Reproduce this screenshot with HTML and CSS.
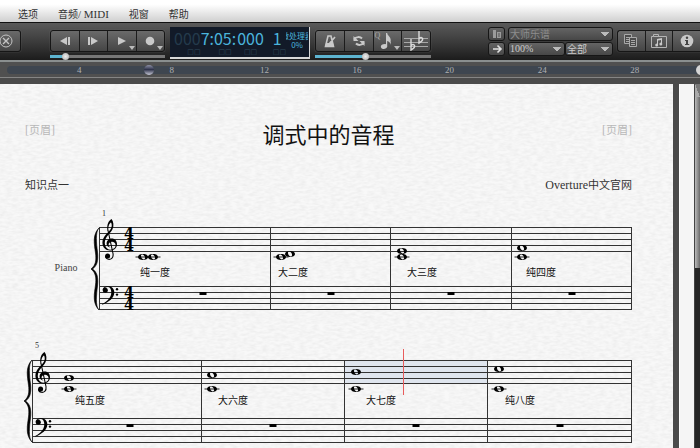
FILE: index.html
```html
<!DOCTYPE html>
<html lang="zh-CN">
<head>
<meta charset="utf-8">
<title>Overture</title>
<link rel="stylesheet" href="styles.css">
</head>
<body>
<nav class="menubar">
  <button>选项</button>
  <button>音频<span class="latin">/ MIDI</span></button>
  <button>视窗</button>
  <button>帮助</button>
</nav>

<header class="toolbar">
  <div class="stack">
    <div class="group group-left">
      <button class="tool tool-close" aria-label="关闭"><svg width="14" height="14" viewBox="0 0 14 14"><g fill="none" stroke="#c4c4c4"><circle cx="6" cy="7" r="6"/><path d="M3 4l6 6M9 4l-6 6" stroke-width="1.4"/></g></svg></button>
    </div>
  </div>

  <div class="stack transport">
    <div class="group">
      <button class="tool" aria-label="后退"><svg width="12" height="10" viewBox="0 0 12 10"><path d="M8 1v8L1 5zM9 1h2v8H9z"/></svg></button>
      <button class="tool" aria-label="前进"><svg width="12" height="10" viewBox="0 0 12 10"><path d="M1 1h2v8H1zM4 1l7 4-7 4z"/></svg></button>
      <button class="tool has-menu" aria-label="播放"><svg width="12" height="10" viewBox="0 0 12 10"><path d="M2 1l8 4-8 4z"/></svg></button>
      <button class="tool has-menu" aria-label="录音"><svg width="12" height="10" viewBox="0 0 12 10"><circle cx="6" cy="5" r="4.3"/></svg></button>
    </div>
    <input class="slider" type="range" min="0" max="100" value="11" style="--fill:13%" aria-label="位置">
  </div>

  <div class="lcd">
    <div class="unit"><div class="digits"><span class="dim">000</span>7:</div><div class="boxes">□□</div></div>
    <div class="unit"><div class="digits">05:</div><div class="boxes">□□</div></div>
    <div class="unit"><div class="digits">000</div><div class="boxes">□□</div></div>
    <div class="unit"><div class="digits">1</div><div class="boxes">□□</div></div>
    <div class="cpu"><span>微处理器</span><span>0%</span></div>
  </div>

  <div class="stack tools">
    <div class="group">
      <button class="tool" aria-label="节拍器"><svg width="14" height="16" viewBox="0 0 14 16"><path fill="none" stroke="#c9c9c9" stroke-width="1.6" d="M5 3h3l2.500 10.500H2.500zM3 11h7M6 11L12 4"/><path d="M3 10h7l1 4H2z"/></svg></button>
      <button class="tool" aria-label="循环"><svg width="14" height="14" viewBox="0 0 14 14"><path fill="none" stroke="#c9c9c9" stroke-width="2" d="M2 5.500C4 2.500 8 2.500 10 4.500M12 8.500C10 11.500 6 11.500 4 9.500"/><path d="M1.500 2v5h5zM12.500 12V7h-5z"/></svg></button>
      <button class="tool has-menu quant" aria-label="量化"><span class="q">Q</span><svg width="14" height="18" viewBox="0 0 14 18"><ellipse cx="4" cy="14.500" rx="3.200" ry="2.300" transform="rotate(-20 4 14.500)"/><path d="M6 1h1.200c0 3 4.800 4 3.300 9.500C10.500 8 8.500 7 7.200 6.500V14.500H6zM7.200 5c1 2 4.500 3 3.600 8C10.800 11 9 9.500 7.200 9z"/></svg></button>
      <button class="tool" aria-label="降号"><svg width="26" height="20" viewBox="0 0 26 20"><path d="M1 7.500h24M1 11.500h24M1 15.500h24" stroke="#a8a8a8"/><path fill="none" stroke="#dadada" stroke-width="1.400" d="M8 8v11c2-1 4-3 3.500-4.500S9 13 8 15M16 0v12c2-1 4-3 3.500-4.500S17 6 16 8"/></svg></button>
    </div>
    <input class="slider" type="range" min="0" max="100" value="43" style="--fill:43%" aria-label="速度">
  </div>

  <div class="view">
    <button class="mini" aria-label="轨道"><svg width="12" height="10" viewBox="0 0 12 10"><path d="M2 1h3v8H2zM6 3h4v6H6z" fill="#9b9b9b"/><path d="M7 5h2M7 7h2" stroke="#555"/></svg></button>
    <select class="wide dimmed" aria-label="视图"><option>大师乐谱</option></select>
    <button class="mini" aria-label="转到"><svg width="12" height="10" viewBox="0 0 12 10"><path fill="none" stroke="#e2e2e2" stroke-width="1.600" d="M2 5h8M6.500 1.500L10 5 6.500 8.500"/></svg></button>
    <select class="zoom" aria-label="缩放"><option>100%</option></select>
    <select aria-label="范围"><option>全部</option></select>
  </div>

  <div class="group group-right">
    <button class="tool" aria-label="复制"><svg width="16" height="16" viewBox="0 0 16 16"><g fill="#4c4c4c" stroke="#a9a9a9"><path d="M1.500 1.500h7v9h-7z"/><path d="M3 4.500h4M3 6.500h4M3 8.500h4"/><path d="M6.500 4.500h7v9h-7z"/><path d="M8 7.500h4M8 9.500h4M8 11.500h4"/></g></svg></button>
    <button class="tool" aria-label="曲库"><svg width="18" height="16" viewBox="0 0 18 16"><path fill="none" stroke="#b5b5b5" d="M1.500 3.500h2v-2h5v2h8v11h-15zM3.500 3.500h6"/><path d="M7 6l5-1v6H11V7L8 7.600V12H7z"/><circle cx="6.700" cy="12" r="1.500"/><circle cx="10.800" cy="11" r="1.500"/></svg></button>
    <button class="tool" aria-label="信息"><svg width="14" height="14" viewBox="0 0 14 14"><circle cx="7" cy="7" r="6.300"/><path d="M5 6h3v4h1.200v1H5v-1h1V7H5z" fill="#444"/><circle cx="7" cy="3.800" r="1.200" fill="#444"/></svg></button>
  </div>
</header>

<div class="ruler">
  <div class="groove">
    <span>4</span><span>8</span><span>12</span><span>16</span><span>20</span><span>24</span><span>28</span>
  </div>
  <input class="playhead" type="range" min="0" max="1000" value="203" aria-label="播放位置">
  <i class="endcap"></i>
</div>

<div class="workspace">
  <main class="page">
    <svg class="grain" aria-hidden="true">
      <filter id="grain" x="0" y="0" width="100%" height="100%">
        <feTurbulence type="fractalNoise" baseFrequency="0.16 0.4" numOctaves="2" seed="4"/>
        <feColorMatrix values="0 0 0 0 0  0 0 0 0 0  0 0 0 0 0  0.08 0 0 0 -0.025"/>
      </filter>
      <rect width="100%" height="100%" filter="url(#grain)"/>
    </svg>

    <div class="heading">
      <span class="slot"><span class="latin">[</span>页眉<span class="latin">]</span></span>
      <h1>调式中的音程</h1>
      <span class="slot end"><span class="latin">[</span>页眉<span class="latin">]</span></span>
    </div>
    <div class="credits">
      <span>知识点一</span>
      <span><span class="latin">Overture</span>中文官网</span>
    </div>

    <svg class="system" viewBox="0 0 673 120">
      <defs>
        <g id="treble">
          <path d="M9.600 0C11.600 2.500 12 7 10.600 10C8.500 14.500 3 17.500 2.800 23.500C2.700 28 5.500 30.700 8.300 30.700C11.500 30.700 13.600 28.600 13.600 26.300C13.600 24 12 22.800 10 22.800C7.800 22.800 6.600 24.200 6.600 25.600C6.600 27 7.300 28 8.600 28.700C6 28.200 4.600 26.500 4.600 24.500C4.600 21.800 6.800 19.600 9.800 19.600C13 19.600 15 22 15 25.300C15 29 12.300 31.600 8 31.600C3.500 31.600 .4 28.500 .4 23.600C.4 17 7 13.500 9 9.500C10 7.500 10 4.500 9 3.400C7.600 4 6 7 6.400 11L5.400 11.500C4.600 6 6.500 1.500 9.600 0Z"/>
          <path d="M5.900 11L11 34.500C11.800 39.500 8.500 40.500 6.500 40.300C4.500 40 3.500 38.500 3.600 37" fill="none" stroke="#000" stroke-width="1.100"/>
          <circle cx="5.600" cy="37" r="2.500"/>
        </g>
        <g id="bass">
          <path d="M.6 4C.6 1.500 3.300 .2 6 .2C10 .2 12.300 2.800 12.300 6.500C12.300 12 7 16 .2 18.700V18C5.500 15.300 9.300 11.500 9.300 6.500C9.300 3 8 1 5.700 1C3.800 1 2 2 1.700 3Z"/>
          <circle cx="3.300" cy="4.200" r="2.500"/>
          <circle cx="15" cy="3.200" r="1.200"/><circle cx="15" cy="8.600" r="1.200"/>
        </g>
        <path id="brace" d="M8 0C1 7 3.500 17 4.500 25C5.300 32 5 37 0 41C5 45 5.300 50 4.500 57C3.500 65 1 75 8 82C4 78 5.500 66 6.500 58C7.500 49 6 44 1.500 41C6 38 7.500 33 6.500 24C5.500 16 4 4 8 0Z" stroke="#000" stroke-width=".6"/>
        <path id="whole" fill-rule="evenodd" d="M-5 0C-5-2-2.800-3 0-3S5-2 5 0 2.800 3 0 3-5 2-5 0ZM-2-1.200C-2.200 .5-.5 2.400 .8 2.400S2.200 1.200 2 .6C1.700-1 .6-2.400-.7-2.400-1.500-2.400-2-2-2-1.200Z"/>
        <path id="low" d="M-7.500 0h15" stroke="#222"/>
        <path id="rest" d="M-3.500 0h7v3h-7z"/>
      </defs>
      <g class="lines">
        <path d="M99 27.500H632M99 33.500H632M99 39.500H632M99 45.500H632M99 51.500H632M99 86.500H632M99 92.500H632M99 98.500H632M99 103.500H632M99 109.500H632"/>
        <path d="M99.500 27V110M270.500 27V110M390.500 27V110M511.500 27V110M631.500 27V110"/>
      </g>
      <use href="#brace" x="91" y="28"/>
      <use href="#treble" x="102" y="19"/>
      <use href="#bass" x="102" y="86"/>
      <g class="meter"><text x="129" y="39">4</text><text x="129" y="51">4</text><text x="129" y="98">4</text><text x="129" y="110">4</text></g>
      <use href="#low" x="143" y="57"/><use href="#low" x="153" y="57"/><use href="#low" x="281" y="57"/><use href="#low" x="402" y="57"/><use href="#low" x="522" y="57"/>
      <use href="#whole" x="143" y="57"/><use href="#whole" x="153" y="57"/>
      <use href="#whole" x="281" y="57"/><use href="#whole" x="290" y="54"/>
      <use href="#whole" x="402" y="51"/><use href="#whole" x="402" y="57"/>
      <use href="#whole" x="522" y="48"/><use href="#whole" x="522" y="57"/>
      <use href="#rest" x="203" y="92"/><use href="#rest" x="331" y="92"/><use href="#rest" x="451" y="92"/><use href="#rest" x="572" y="92"/>
      <text class="number" x="104" y="16">1</text>
      <text class="part" x="66" y="71">Piano</text>
      <g class="lyric"><text x="155" y="76">纯一度</text><text x="293" y="76">大二度</text><text x="422" y="76">大三度</text><text x="541" y="76">纯四度</text></g>
    </svg>

    <svg class="system" viewBox="0 0 673 120">
      <path class="selection" d="M345 25h143v24H345z"/>
      <g class="lines">
        <path d="M32 25.500H632M32 31.500H632M32 37.500H632M32 43.500H632M32 48.500H632M32 83.500H632M32 89.500H632M32 95.500H632M32 101.500H632M32 107.500H632"/>
        <path d="M32.500 25V108M201.500 25V108M344.500 25V108M487.500 25V108M631.500 25V108"/>
      </g>
      <use href="#brace" x="24" y="25"/>
      <use href="#treble" x="35" y="17"/>
      <use href="#bass" x="35" y="83"/>
      <use href="#low" x="69" y="54"/><use href="#low" x="212" y="54"/><use href="#low" x="356" y="54"/><use href="#low" x="499" y="54"/>
      <use href="#whole" x="69" y="43"/><use href="#whole" x="69" y="54"/>
      <use href="#whole" x="212" y="40"/><use href="#whole" x="212" y="54"/>
      <use href="#whole" x="356" y="37"/><use href="#whole" x="356" y="54"/>
      <use href="#whole" x="499" y="34"/><use href="#whole" x="499" y="54"/>
      <use href="#rest" x="130" y="89"/><use href="#rest" x="273" y="89"/><use href="#rest" x="416" y="89"/><use href="#rest" x="560" y="89"/>
      <text class="number" x="37" y="13">5</text>
      <g class="lyric"><text x="90" y="69">纯五度</text><text x="233" y="69">大六度</text><text x="381" y="69">大七度</text><text x="520" y="69">纯八度</text></g>
      <path class="cursor" d="M403 14h1v46h-1z"/>
    </svg>
  </main>
  <div class="next-page"></div>
  <div class="scrollbar"><div class="arrow"></div><div class="thumb"></div></div>
</div>
</body>
</html>
```
FILE: styles.css
```css
* { box-sizing: border-box; }

body {
  margin: 0;
  height: 100vh;
  display: flex;
  flex-direction: column;
  overflow: hidden;
  background: #4b4b4b;
  font-family: "Noto Sans CJK SC", sans-serif;
}

button, select {
  margin: 0;
  padding: 0;
  border: 0;
  background: none;
  color: inherit;
  font: inherit;
}

.latin { font: 12px/12px "Liberation Serif", serif; }

/* Menu bar */
.menubar {
  flex: none;
  display: flex;
  gap: 20px;
  height: 22px;
  padding: 6px 18px 0;
  background: linear-gradient(#fff 20%, #cfcfcf);
  color: #333;
  font-size: 10px;
  line-height: 16px;
}
.menubar button { white-space: pre; }
.menubar .latin { font-size: 11px; }

/* Toolbar */
.toolbar {
  flex: none;
  display: flex;
  height: 38px;
  padding-top: 4px;
  border-top: 1px solid #111;
  background: linear-gradient(#5a5a5a, #3c3c3c 50%, #1c1c1c);
  overflow: hidden;
}
.stack { padding-top: 3px; flex: none; }
.transport { width: 115px; margin-left: 29px; }
.tools { width: 116px; margin-left: 5px; }

.group {
  display: flex;
  height: 22px;
  border: 1px solid #161616;
  border-radius: 3px;
  background: linear-gradient(#6a6a6a, #454545);
  box-shadow: 0 0 1px #888;
}
.tool {
  position: relative;
  flex: 1;
  display: flex;
  align-items: center;
  justify-content: center;
  border-left: 1px solid #1c1c1c;
  fill: #c9c9c9;
}
.tool:first-child { border-left: 0; }
.group-left { width: 21px; border-left: 0; border-radius: 0 3px 3px 0; }
.tool-close { justify-content: flex-start; }
.has-menu::after {
  content: "";
  position: absolute;
  right: 1px;
  bottom: 1px;
  border: 3px solid transparent;
  border-top: 4px solid #bbb;
  border-bottom: 0;
}
.q {
  position: absolute;
  left: 1px;
  top: 0;
  color: #aaa;
  font: 8px/10px "Liberation Serif", serif;
}

.slider {
  display: block;
  width: 100%;
  height: 8px;
  margin: 0;
  appearance: none;
  background: linear-gradient(90deg, #5db4d0 var(--fill), #777 var(--fill)) center / 100% 3px no-repeat;
}
.slider::-webkit-slider-thumb {
  appearance: none;
  width: 7px;
  height: 7px;
  border-radius: 50%;
  background: radial-gradient(#eee, #aaa);
}

/* Time display */
.lcd {
  flex: none;
  display: flex;
  width: 140px;
  height: 32px;
  margin-left: 5px;
  padding: 0 1px 0 4px;
  border: solid #d8d8d8;
  border-width: 0 1px 2px 0;
  background: #121a28;
  color: #4bb4dc;
  overflow: hidden;
}
.digits {
  height: 22px;
  font: 16px/22px "Noto Sans CJK SC", sans-serif;
  white-space: nowrap;
}
.dim { color: #243a4c; }
.boxes { color: #2f4a5c; font: 7px/7px "DejaVu Sans", sans-serif; text-align: center; }
.unit:nth-child(2) { margin-right: 1px; }
.unit:nth-child(3) { margin-right: 9px; }
.cpu {
  flex: 1;
  min-width: 0;
  display: flex;
  flex-direction: column;
  align-items: center;
  padding-top: 4px;
  overflow: hidden;
  font-size: 8px;
  line-height: 9px;
  white-space: nowrap;
}

/* View selectors */
.view {
  flex: none;
  display: grid;
  grid-template-columns: 20px 57px 48px;
  grid-auto-rows: 14px;
  gap: 1px 0;
  margin-left: auto;
  margin-right: 4px;
}
.mini, .view select {
  border: 1px solid #161616;
  border-radius: 3px;
  background: linear-gradient(#646464, #474747);
}
.mini { display: flex; align-items: center; justify-content: center; width: 17px; }
.view select {
  appearance: none;
  padding-left: 1px;
  color: #ccc;
  font-size: 10px;
  line-height: 12px;
  background:
    linear-gradient(to bottom right, #bbb 50%, transparent 50%) right 3px center / 4px 5px no-repeat,
    linear-gradient(to bottom left, #bbb 50%, transparent 50%) right 7px center / 4px 5px no-repeat,
    linear-gradient(#646464, #474747);
}
.view .wide { grid-column: 2 / span 2; }
.view .dimmed { color: #8d8d8d; }
.view .zoom { font: 10px/12px "Liberation Serif", serif; }
.group-right {
  flex: none;
  width: 83px;
  height: 22px;
  margin-top: 3px;
  border-right: 0;
  border-radius: 3px 0 0 3px;
}

/* Measure ruler */
.ruler {
  position: relative;
  flex: none;
  height: 24px;
  padding: 4px 0 0 7px;
  border-top: 2px solid #8a8f8f;
  background: linear-gradient(#505050 15px, #858585 15px, #858585 16px, #4b4b4b 16px);
  overflow: hidden;
}
.groove {
  display: grid;
  grid-template-columns: repeat(7, 1fr);
  height: 8px;
  padding: 0 19px 0 26px;
  border-radius: 4px 0 0 4px;
  background: #3e4650;
  color: #b0b0b0;
  font: 9px/8px "Liberation Serif", serif;
  text-align: center;
}
.playhead {
  position: absolute;
  left: 7px;
  top: 3px;
  width: calc(100% - 15px);
  height: 10px;
  margin: 0;
  appearance: none;
  background: none;
}
.playhead::-webkit-slider-thumb {
  appearance: none;
  width: 10px;
  height: 10px;
  border-radius: 50%;
  background: linear-gradient(#8d90a6, #30344c 45%, #c8cad8);
}
.endcap {
  position: absolute;
  right: -6px;
  top: 3px;
  width: 10px;
  height: 10px;
  border-radius: 50%;
  background: #d5d5d5;
}

/* Score */
.workspace { flex: 1; min-height: 0; display: flex; }
.page {
  position: relative;
  flex: 1;
  min-width: 0;
  background: #f8f8f8;
  overflow: hidden;
  color: #333;
  font-size: 11px;
  line-height: 20px;
}
.grain { position: absolute; inset: 0; width: 100%; height: 100%; }
.heading, .credits, .system { position: relative; }
.heading {
  display: grid;
  grid-template-columns: 1fr auto 1fr;
  padding: 34px 41px 0 25px;
}
.heading h1 {
  margin: 0;
  color: #111;
  font-size: 22px;
  font-weight: 400;
  line-height: 30px;
}
.slot { padding-top: 1px; color: #b8b8b8; }
.end { text-align: right; }
.credits {
  display: flex;
  justify-content: space-between;
  height: 20px;
  margin: 26px 41px 6px 25px;
}
.system { display: block; width: 100%; margin-bottom: 15px; overflow: visible; }
.lines { fill: none; stroke: #333; stroke-width: 1; }
.meter { font: bold 16px "DejaVu Serif Condensed", "DejaVu Serif", serif; text-anchor: middle; fill: #000; }
.lyric { font-size: 10px; text-anchor: middle; fill: #111; }
.number { font: 8px "Liberation Serif", serif; text-anchor: middle; fill: #333; }
.part { font: 10px "Liberation Serif", serif; text-anchor: middle; fill: #444; }
.selection { fill: #dfe5ee; }
.cursor { fill: #e85c5c; }

.next-page { width: 15px; margin-left: 6px; background: #f5f5f5; border-left: 1px solid #fff; }
.scrollbar {
  width: 6px;
  border-left: 1px solid #444;
  background: #262626;
}
.arrow { height: 13px; background: linear-gradient(to top right, #aaa 50%, #777 50%); }
.thumb { height: 47%; background: linear-gradient(90deg, #bbb, #6a6a6a); }
```
